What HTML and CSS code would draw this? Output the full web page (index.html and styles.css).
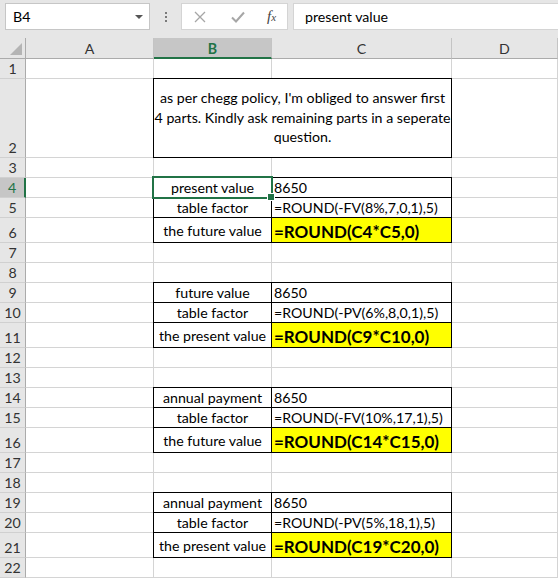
FILE: index.html
```html
<!DOCTYPE html>
<html>
<head>
<meta charset="utf-8">
<link rel="stylesheet" href="styles.css">
</head>
<body>
<div class="app">
  <div class="toolbar">
    <div class="namebox"><span class="nb-text">B4</span><span class="nb-arrow"></span></div>
    <div class="dots"><i></i><i></i><i></i></div>
    <div class="fxbox">
      <svg class="ico-x" width="12" height="12" viewBox="0 0 12 12"><path d="M1 1L11 11M11 1L1 11" stroke="#a6a6a6" stroke-width="1.3" fill="none"/></svg>
      <svg class="ico-check" width="14" height="12" viewBox="0 0 14 12"><path d="M1 6.5L5 10.5L13 1.5" stroke="#a6a6a6" stroke-width="2" fill="none"/></svg>
      <span class="fx">f<small>x</small></span>
    </div>
    <div class="formula">present value</div>
  </div>
  <div class="sheet">
    <div class="corner"><span class="tri"></span></div>
    <div class="ch">A</div>
    <div class="ch chsel">B</div>
    <div class="ch">C</div>
    <div class="ch">D</div>

    <div class="rh">1</div><div class="c"></div><div class="c"></div><div class="c"></div><div class="c"></div>

    <div class="rh">2</div><div class="c"></div>
    <div class="bx note">as per chegg policy, I'm obliged to answer first<br>4 parts. Kindly ask remaining parts in a seperate<br>question.</div>
    <div class="c"></div>

    <div class="rh">3</div><div class="c"></div><div class="c"></div><div class="c"></div><div class="c"></div>

    <div class="rh rhsel">4</div><div class="c"></div><div class="bx lbl sel">present value</div><div class="bx val">8650</div><div class="c"></div>
    <div class="rh">5</div><div class="c"></div><div class="bx lbl">table factor</div><div class="bx val">=ROUND(-FV(8%,7,0,1),5)</div><div class="c"></div>
    <div class="rh">6</div><div class="c"></div><div class="bx lbl">the future value</div><div class="bx val hl">=ROUND(C4*C5,0)</div><div class="c"></div>

    <div class="rh">7</div><div class="c"></div><div class="c"></div><div class="c"></div><div class="c"></div>
    <div class="rh">8</div><div class="c"></div><div class="c"></div><div class="c"></div><div class="c"></div>

    <div class="rh">9</div><div class="c"></div><div class="bx lbl">future value</div><div class="bx val">8650</div><div class="c"></div>
    <div class="rh">10</div><div class="c"></div><div class="bx lbl">table factor</div><div class="bx val">=ROUND(-PV(6%,8,0,1),5)</div><div class="c"></div>
    <div class="rh">11</div><div class="c"></div><div class="bx lbl">the present value</div><div class="bx val hl">=ROUND(C9*C10,0)</div><div class="c"></div>

    <div class="rh">12</div><div class="c"></div><div class="c"></div><div class="c"></div><div class="c"></div>
    <div class="rh">13</div><div class="c"></div><div class="c"></div><div class="c"></div><div class="c"></div>

    <div class="rh">14</div><div class="c"></div><div class="bx lbl">annual payment</div><div class="bx val">8650</div><div class="c"></div>
    <div class="rh">15</div><div class="c"></div><div class="bx lbl">table factor</div><div class="bx val">=ROUND(-FV(10%,17,1),5)</div><div class="c"></div>
    <div class="rh">16</div><div class="c"></div><div class="bx lbl">the future value</div><div class="bx val hl">=ROUND(C14*C15,0)</div><div class="c"></div>

    <div class="rh">17</div><div class="c"></div><div class="c"></div><div class="c"></div><div class="c"></div>
    <div class="rh">18</div><div class="c"></div><div class="c"></div><div class="c"></div><div class="c"></div>

    <div class="rh">19</div><div class="c"></div><div class="bx lbl">annual payment</div><div class="bx val">8650</div><div class="c"></div>
    <div class="rh">20</div><div class="c"></div><div class="bx lbl">table factor</div><div class="bx val">=ROUND(-PV(5%,18,1),5)</div><div class="c"></div>
    <div class="rh">21</div><div class="c"></div><div class="bx lbl">the present value</div><div class="bx val hl">=ROUND(C19*C20,0)</div><div class="c"></div>

    <div class="rh">22</div><div class="c"></div><div class="c"></div><div class="c"></div><div class="c"></div>
  </div>
</div>
</body>
</html>
```
FILE: styles.css
```css
* { box-sizing: border-box; }
html, body { margin: 0; padding: 0; background: #fff; }
body { font-family: Lato, "Liberation Sans", sans-serif; font-size: 14.2px; color: #000; overflow: hidden; }

.app { width: 558px; height: 579px; overflow: hidden; }

.toolbar {
  height: 38px;
  background: #e6e6e6;
  display: flex;
  align-items: flex-start;
  padding: 3px 0 0 5px;
}
.namebox {
  width: 145px; height: 27px;
  background: #fff; border: 1px solid #c6c6c6;
  display: flex; align-items: center; justify-content: space-between;
  padding: 0 6px 0 7px;
  font-size: 14.2px;
}
.nb-arrow {
  width: 0; height: 0;
  border-left: 4px solid transparent; border-right: 4px solid transparent;
  border-top: 4px solid #555;
}
.dots { width: 31px; height: 27px; display: flex; flex-direction: column; align-items: center; justify-content: center; gap: 2px; }
.dots i { display: block; width: 2px; height: 2px; background: #7a7a7a; }
.fxbox {
  width: 107px; height: 27px; background: #fff; border: 1px solid #d4d4d4;
  display: flex; align-items: center; padding-left: 12px;
}
.ico-x { margin-right: 25px; }
.ico-check { margin-right: 22px; }
.fx { font-family: "Liberation Serif", serif; font-style: italic; font-size: 15px; color: #444; }
.fx small { font-size: 11px; }
.formula {
  flex: 1; height: 27px; margin-left: 5px; background: #fff; border: 1px solid #d4d4d4; border-right: 0;
  display: flex; align-items: center; padding-left: 11px; font-size: 14.2px;
}

.sheet {
  display: grid;
  grid-template-columns: 26px 128px 118px 180px 1fr;
  grid-template-rows: 21px 20px 79px repeat(3, 20px) 25px repeat(4, 20px) 25px repeat(4, 20px) 25px repeat(4, 20px) 25px 20px;
}
.corner { background: #e6e6e6; border-right: 1px solid #ababab; border-bottom: 1px solid #ababab; position: relative; }
.tri {
  position: absolute; right: 3px; bottom: 3px; width: 0; height: 0;
  border-left: 12px solid transparent; border-bottom: 12px solid #b4b4b4;
}
.ch {
  background: #e6e6e6; border-right: 1px solid #c4c4c4; border-bottom: 1px solid #ababab;
  display: flex; align-items: center; justify-content: center; color: #333; padding-top: 1px;
}
.chsel { background: #c6c6c6; border-bottom: 2px solid #217346; color: #217346; font-weight: bold; padding-top: 2px; }
.rh {
  background: #e6e6e6; border-right: 1px solid #ababab; border-bottom: 1px solid #d0d0d0;
  display: flex; align-items: flex-end; justify-content: center; color: #333; padding-bottom: 1px;
}
.rhsel { background: #c6c6c6; border-right: 2px solid #217346; color: #217346; }
.c { border-right: 1px solid #d4d4d4; border-bottom: 1px solid #d4d4d4; }
.bx {
  border: 1px solid #000; margin: -1px 0 0 -1px;
  display: flex; align-items: center; padding: 0 2px; white-space: nowrap;
}
.lbl { justify-content: center; }
.val { justify-content: flex-start; padding-left: 2px; }
.hl { background: #ffff00; font-weight: bold; font-size: 17px; padding-top: 2px; }
.note { grid-column: span 2; align-items: center; justify-content: center; text-align: center; line-height: 19.5px; padding: 0 0 1px; }
.sel { position: relative; }
.sel::after {
  content: ""; position: absolute; top: -2px; left: -2px; right: -2px; bottom: -2px;
  border: 2px solid #217346;
}
.sel::before {
  content: ""; position: absolute; right: -4px; bottom: -4px; width: 6px; height: 6px;
  background: #217346; border: 1px solid #fff; z-index: 1;
}
```
